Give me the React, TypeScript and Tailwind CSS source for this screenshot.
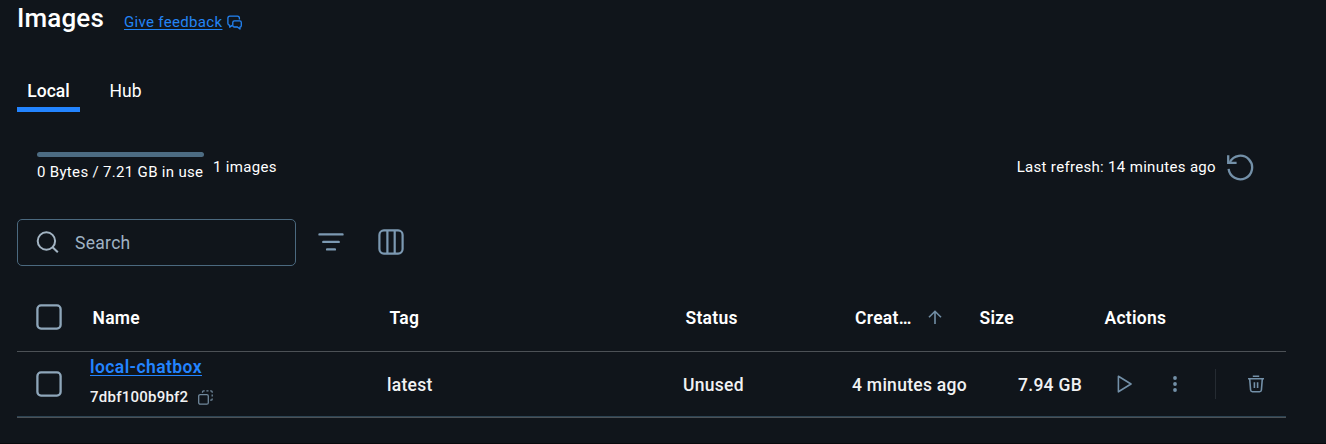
import React from "react";

const TEXT = "whitespace-nowrap leading-none";

function Checkbox() {
  return (
    <svg width="26" height="26" viewBox="0 0 26 26" fill="none" stroke="#8ea6ba" strokeWidth="2.3" role="checkbox" aria-checked="false">
      <rect x="1.4" y="1.4" width="23.2" height="23.2" rx="3.6" />
    </svg>
  );
}

function FeedbackIcon() {
  return (
    <svg className="ml-[5px]" width="16" height="16" viewBox="0 0 16 16" fill="none" stroke="#2384f5" strokeWidth="1.3" strokeLinejoin="round">
      <path d="M12.4 4.6V3.2C12.4 2 11.7 1.2 10.5 1.2H2.8C1.6 1.2.9 2 .9 3.2v5.2c0 1.1.7 1.8 1.8 1.8v2l2.5-1.8" />
      <path d="M7.4 5.9h5.3c1 0 1.6.6 1.6 1.6V10.4c0 1-.6 1.6-1.3 1.6v2L10.4 12H7.4c-1 0-1.6-.6-1.6-1.6V7.5c0-1 .6-1.6 1.6-1.6Z" />
    </svg>
  );
}

function Header() {
  return (
    <header className="flex h-[38px] items-center pl-[17px]">
      <h1 className={`${TEXT} mb-[2px] w-[107px] text-[26px] font-medium tracking-[0.15px] text-white`}>Images</h1>
      <a className={`${TEXT} mt-[6px] text-[15px] tracking-[0.33px] text-[#2384f5] underline underline-offset-2`}>Give feedback</a>
      <div className="mt-[7px]"><FeedbackIcon /></div>
    </header>
  );
}

function Tabs() {
  return (
    <nav className="mt-[34px] flex h-10 gap-5 pl-[17px] text-[17.5px] text-white">
      <div className={`${TEXT} flex w-[63px] items-center justify-center border-b-5 border-[#2384ff] pt-[5px] font-medium`}>Local</div>
      <div className={`${TEXT} flex w-[51px] items-center justify-center border-b-5 border-transparent pt-[5px]`}>Hub</div>
    </nav>
  );
}

function Usage() {
  return (
    <section className="mt-[35px] flex h-10 items-center pr-[72px] pl-[37px] text-[15px] tracking-[0.32px] text-white">
      <div className="w-[167px]">
        <div className="h-[5px] rounded-full bg-[#4d6c83]" />
        <div className={`${TEXT} mt-[8px] mb-[2px]`}>0 Bytes / 7.21 GB in use</div>
      </div>
      <div className={`${TEXT} ml-[9px]`}>1 images</div>
      <div className={`${TEXT} ml-auto`}>Last refresh: 14 minutes ago</div>
      <svg className="ml-[10px]" width="28" height="28" viewBox="0 0 28 28" fill="none" stroke="#7390a8" strokeWidth="2.3">
        <path d="M3.9 9A11.8 11.8 0 1 1 2.6 15.9" />
        <path d="M2.2 2.2V9.8H10.6" />
      </svg>
    </section>
  );
}

function Toolbar() {
  return (
    <section className="mt-8 flex h-[47px] items-center pl-[17px]">
      <div className="flex h-[47px] w-[279px] items-center rounded-[5px] border border-[#4b697f] pl-[18px]">
        <svg width="23" height="23" viewBox="0 0 23 23" fill="none" stroke="#a3b4c3" strokeWidth="2">
          <circle cx="10.4" cy="10" r="8.7" />
          <path d="m16.6 16.2 5.2 5.1" />
        </svg>
        <span className={`${TEXT} mt-[2px] ml-4 text-[17.5px] tracking-[0.3px] text-[#9fb2c3]`}>Search</span>
      </div>
      <svg className="mb-[2px] ml-[22px]" width="26" height="26" viewBox="0 0 26 26" stroke="#7c99b2" strokeWidth="2.4" strokeLinecap="round">
        <path d="M1.5 5.4h23M5.3 12.9h15.4M9.1 20.4h7.8" />
      </svg>
      <svg className="mb-[2px] ml-[34px]" width="26" height="26" viewBox="0 0 26 26" fill="none" stroke="#7c99b2" strokeWidth="2.2">
        <rect x="1.4" y="1.4" width="23.2" height="23.2" rx="4.5" />
        <path d="M9.4 1.5v23M16.7 1.5v23" />
      </svg>
    </section>
  );
}

const GRID = "ml-[17px] grid w-[1269px] grid-cols-[73px_297px_296px_169px_125px_125px_1fr] items-center text-[17.5px] text-white";

function ImagesTable() {
  return (
    <section className="mt-[18px]">
      <div className={`${GRID} h-[68px] border-b border-[#4c5156] font-semibold tracking-[0.28px] [&>span]:pt-[2px] [&>span]:pl-[2.5px]`}>
        <div className="mb-[2px] pl-[19px]"><Checkbox /></div>
        <span className={TEXT}>Name</span>
        <span className={TEXT}>Tag</span>
        <span className={TEXT}>Status</span>
        <div className="flex items-center pl-[3px]">
          <span className={`${TEXT} w-[59px] pt-[2px]`}>Creat…</span>
          <svg className="ml-[14px]" width="14" height="15" viewBox="0 0 14 15" fill="none" stroke="#718ea5" strokeWidth="1.6">
            <path d="M7 14V1.5M1 7.3 7 1.3l6 6" />
          </svg>
        </div>
        <span className={TEXT}>Size</span>
        <span className={TEXT}>Actions</span>
      </div>
      <div className={`${GRID} h-[64px] [&>span]:pt-[4px] [&>span]:font-medium [&>span]:tracking-[0.28px] [&>span]:text-[#f1f2f3]`}>
        <div className="pl-[19px]"><Checkbox /></div>
        <div className="mb-[4px]">
          <a className={`${TEXT} block text-[17.5px] font-semibold tracking-[0.42px] text-[#2384ff] underline underline-offset-2`}>local-chatbox</a>
          <div className="mt-[13px] flex items-center">
            <span className={`${TEXT} text-[15px] font-medium tracking-[0.24px] text-[#f1f2f3]`}>7dbf100b9bf2</span>
            <svg className="ml-[9.5px]" width="15" height="15" viewBox="0 0 15 15" fill="none" stroke="#70889c" strokeWidth="1.3">
              <rect x=".7" y="4.6" width="9.6" height="9.6" rx="1.5" />
              <path d="M4.5 2.7V2C4.5 1.3 5 .8 5.7.8h1M8.4.8h2.1M12.2.8h.8c.7 0 1.2.5 1.2 1.2v.8M14.2 4.5v2.1M14.2 8.4V9c0 .8-.5 1.2-1.2 1.2h-.8" />
            </svg>
          </div>
        </div>
        <span className={TEXT}>latest</span>
        <span className={TEXT}>Unused</span>
        <span className={TEXT}>4 minutes ago</span>
        <span className={`${TEXT} pr-[20px] text-right`}>7.94 GB</span>
        <div className="flex items-center pl-[14px]">
          <svg width="16" height="18" viewBox="0 0 16 18" fill="none" stroke="#7390a8" strokeWidth="1.6" strokeLinejoin="round">
            <path d="M2.4 1.2 15 9 2.4 16.8Z" />
          </svg>
          <svg className="ml-[40px]" width="6" height="18" viewBox="0 0 6 18" fill="#7390a8">
            <circle cx="3" cy="3" r="1.9" />
            <circle cx="3" cy="9" r="1.9" />
            <circle cx="3" cy="15" r="1.9" />
          </svg>
          <div className="ml-[37px] h-[30px] w-px bg-[#252b32]" />
          <svg className="ml-[32px]" width="17" height="18" viewBox="0 0 17 18" fill="none" stroke="#7390a8" strokeWidth="1.6">
            <path d="M0 3.7h16M4.8 1.2h6.4M1.7 4l.9 11c.1 1.1.8 1.7 1.8 1.7h7.2c1 0 1.7-.6 1.8-1.7l.9-11M6.4 7.2v5.8M9.6 7.2v5.8" />
          </svg>
        </div>
      </div>
      <div className="ml-[17px] h-[2px] w-[1269px] border-t border-[#2c4352] bg-[#4c5156]" />
    </section>
  );
}

export default function App() {
  return (
    <main className="h-[444px] w-[1326px] overflow-hidden border-b border-[#080a0d] bg-[#10151b] font-[Roboto,sans-serif]">
      <Header />
      <Tabs />
      <Usage />
      <Toolbar />
      <ImagesTable />
    </main>
  );
}
